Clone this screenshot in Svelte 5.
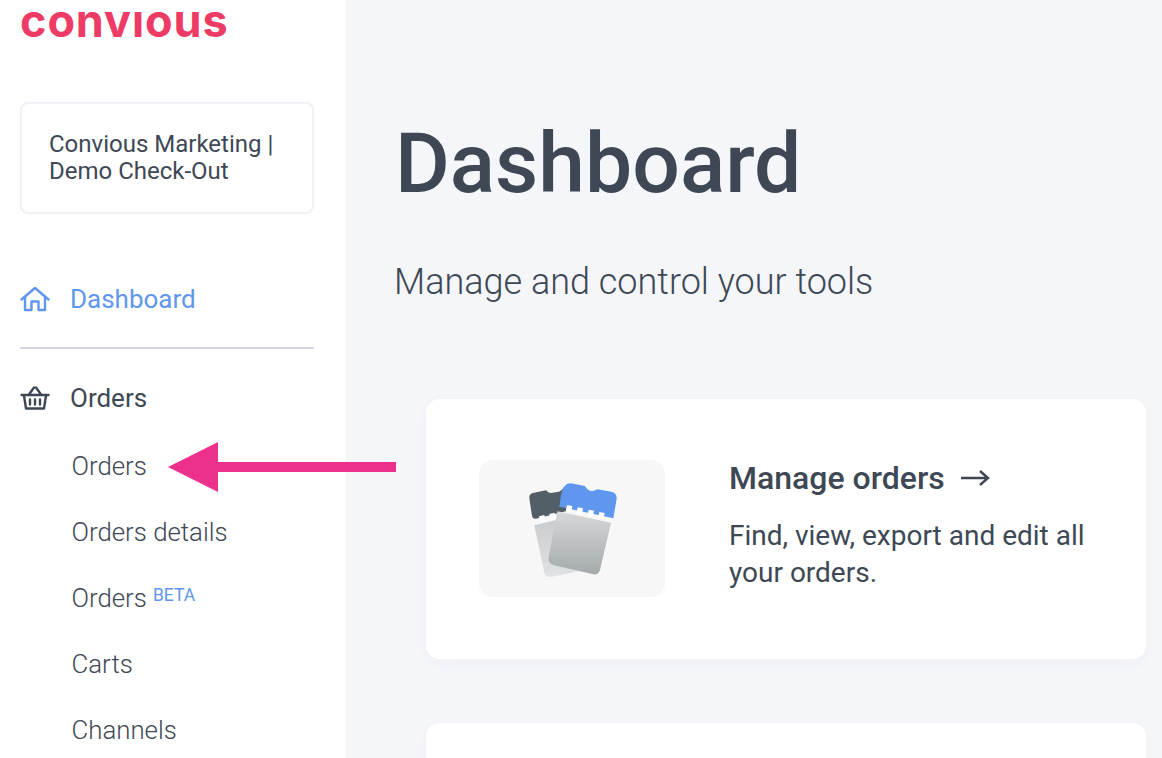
<script>
	const subItems = [
		{ label: "Orders" },
		{ label: "Orders details" },
		{ label: "Orders", beta: true },
		{ label: "Carts" },
		{ label: "Channels" },
	];
</script>

<div class="page">
	<aside class="sidebar">
		<div class="logo">convıous</div>
		<div class="account">Convious Marketing | Demo Check-Out</div>

		<a class="nav-head active" href="#dashboard">
			<svg width="30" height="26" viewBox="0 0 30 26" fill="none" stroke="currentColor" stroke-width="2.4" stroke-linecap="round" stroke-linejoin="round">
				<path d="M1.5 13.5 15 2l13.5 11.5" />
				<path d="M5 11v13h6.5v-8.5h7V24H25V11" />
			</svg>
			<span>Dashboard</span>
		</a>
		<hr />
		<div class="nav-head">
			<svg width="30" height="24" viewBox="0 0 30 24" fill="none" stroke="currentColor" stroke-width="2.4" stroke-linecap="round" stroke-linejoin="round">
				<path d="M1.5 9h27" />
				<path d="M4 9.5 6 22.5h18l2-13" />
				<path d="M9 8.5 14 1.5M21 8.5 16 1.5" />
				<path d="M10 13.5v5M15 13.5v5M20 13.5v5" />
			</svg>
			<span>Orders</span>
		</div>
		<ul class="sub">
			{#each subItems as item}
				<li>{item.label}{#if item.beta}<sup>BETA</sup>{/if}</li>
			{/each}
		</ul>
	</aside>

	<main class="content">
		<h1>Dashboard</h1>
		<p class="lead">Manage and control your tools</p>

		<div class="cards">
			<section class="card">
				<div class="thumb">
					<svg width="186" height="137" viewBox="27 30 558 411">
						<defs>
							<linearGradient id="paper" x1="0" y1="0" x2="0" y2="1">
								<stop offset="0" stop-color="#d6d8d9" />
								<stop offset="1" stop-color="#a5aaad" />
							</linearGradient>
							<linearGradient id="back" x1="0" y1="0" x2="0" y2="1">
								<stop offset="0" stop-color="#c9cccf" />
								<stop offset="1" stop-color="#e0e2e3" />
							</linearGradient>
						</defs>
						<path d="M193 226 300 200 335 362 245 380Q228 383 223 368Z" fill="url(#back)" />
						<path d="M178 145Q177 130 192 128L228 121Q236 131 248 128L262 126Q272 126 282 112L290 183 198 206Q188 208 186 198Z" fill="#535f66" />
						<path d="M207 199l16-4 4 18-16 4zM238 192l16-4 4 18-16 4z" fill="#fff" />
						<path d="M272 140Q280 98 302 100L345 108Q358 132 382 118L424 125Q441 129 440 146L430 205 268 170Z" fill="#5f97ee" />
						<path d="M262 184 423 218 390 360Q385 376 370 373L252 346Q232 341 236 322Z" fill="url(#paper)" />
						<path d="M291 165l16 3-4 19-16-3zM323 172l16 3-4 19-16-3zM356 179l16 3-4 19-16-3zM388 186l16 3-4 19-16-3z" fill="#fff" />
					</svg>
				</div>
				<div class="card-body">
					<h2>Manage orders
						<svg width="30" height="18" viewBox="0 0 30 18" fill="none" stroke="currentColor" stroke-width="2.4">
							<path d="M1 9h27M20 2l8 7-8 7" />
						</svg>
					</h2>
					<p>Find, view, export and edit all your orders.</p>
				</div>
			</section>
			<section class="card"></section>
		</div>
	</main>

	<svg class="pointer" width="230" height="54" viewBox="0 0 230 54">
		<path d="M1 27 51 2v20h178v10H51v20z" fill="#ec318c" />
	</svg>
</div>

<style>
	:global(body) {
		margin: 0;
		background: #f5f6fa;
	}

	.page {
		display: flex;
		position: relative;
		width: 1162px;
		height: 758px;
		overflow: hidden;
		font-family: Roboto, sans-serif;
		color: #3e4855;
	}

	.sidebar {
		flex: 0 0 346px;
		box-sizing: border-box;
		padding: 0 32px 0 20px;
		background: #fff;
	}

	.logo {
		height: 102px;
		font-family: Inter, sans-serif;
		font-weight: 700;
		font-size: 45px;
		line-height: 42px;
		letter-spacing: 0.9px;
		color: #ee3b65;
	}

	.account {
		box-sizing: border-box;
		height: 112px;
		display: flex;
		align-items: center;
		padding: 0 27px;
		border: 2px solid #f0f1f6;
		border-radius: 8px;
		font-size: 24px;
		line-height: 27px;
	}

	.nav-head {
		display: flex;
		align-items: center;
		gap: 20px;
		height: 32px;
		font-size: 26px;
		color: inherit;
		text-decoration: none;
	}

	.nav-head.active {
		margin-top: 69px;
		color: #5f97ee;
	}

	hr {
		height: 2px;
		margin: 32px 0 33px;
		border: 0;
		background: #d3d6da;
	}

	.sub {
		margin: 36px 0 0;
		padding: 0 0 0 51.5px;
		list-style: none;
		font-size: 25.8px;
		font-weight: 300;
	}

	.sub li {
		height: 66px;
		line-height: 32px;
		white-space: nowrap;
	}

	sup {
		margin-left: 6px;
		font-size: 17.5px;
		line-height: 0;
		font-weight: 400;
		vertical-align: 5.6px;
		color: #5f97ee;
	}

	.content {
		flex: 1;
		padding: 0 16px 0 49px;
	}

	h1 {
		margin: 114px 0 0;
		font-size: 84px;
		line-height: 100px;
		font-weight: 500;
	}

	.lead {
		margin: 48px 0 0 -1px;
		font-size: 36px;
		line-height: 40px;
		font-weight: 300;
	}

	.cards {
		display: flex;
		flex-direction: column;
		gap: 64px;
		margin: 97px 0 0 31px;
	}

	.card {
		flex: 0 0 260px;
		display: flex;
		align-items: center;
		gap: 64px;
		box-sizing: border-box;
		height: 260px;
		padding: 0 53px;
		border-radius: 14px;
		background: #fff;
		box-shadow: 0 4px 16px rgba(60, 70, 90, 0.03);
	}

	.thumb {
		flex: 0 0 186px;
		height: 137px;
		margin-top: -1px;
		border-radius: 14px;
		background: #f7f7f7;
	}

	.thumb svg {
		display: block;
	}

	.card-body {
		margin-top: -8px;
	}

	h2 {
		display: flex;
		align-items: center;
		gap: 15px;
		margin: 0;
		font-size: 32px;
		line-height: 36px;
		font-weight: 500;
	}

	.card-body p {
		margin: 21px 0 0;
		font-size: 28px;
		line-height: 37px;
	}

	.pointer {
		position: absolute;
		left: 167px;
		top: 440px;
	}
</style>
